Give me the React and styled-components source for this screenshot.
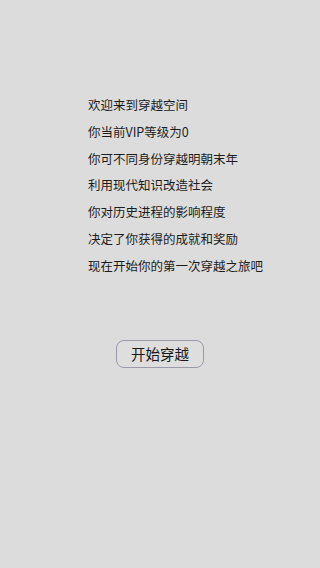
import React from "react";
import styled, { createGlobalStyle } from "styled-components";

const GlobalStyle = createGlobalStyle`
  html, body {
    margin: 0;
    padding: 0;
    background: #dcdcdc;
  }
  body {
    font-family: "Noto Sans CJK SC", "Liberation Sans", sans-serif;
  }
`;

const Page = styled.div`
  width: 320px;
  height: 568px;
  background: #dcdcdc;
  display: flex;
  flex-direction: column;
  align-items: center;
`;

const Intro = styled.div`
  margin-top: 92px;
  align-self: flex-start;
  padding-left: 88px;
  display: flex;
  flex-direction: column;
`;

const Line = styled.p`
  margin: 0;
  font-size: 12.5px;
  line-height: 26.8px;
  color: #1c1c1c;
`;

const StartButton = styled.button`
  margin-top: 60px;
  margin-left: 0;
  width: 88px;
  height: 28px;
  border: 1px solid #9c99aa;
  border-radius: 8px;
  background: #dedede;
  color: #1a1a1a;
  font-family: "Noto Sans CJK SC", "Liberation Sans", sans-serif;
  font-size: 14.5px;
  line-height: 26px;
  padding: 0;
  cursor: pointer;
`;

const lines = [
  "欢迎来到穿越空间",
  "你当前VIP等级为0",
  "你可不同身份穿越明朝末年",
  "利用现代知识改造社会",
  "你对历史进程的影响程度",
  "决定了你获得的成就和奖励",
  "现在开始你的第一次穿越之旅吧",
];

export default function App() {
  return (
    <>
      <GlobalStyle />
      <Page>
        <Intro>
          {lines.map((t) => (
            <Line key={t}>{t}</Line>
          ))}
        </Intro>
        <StartButton>开始穿越</StartButton>
      </Page>
    </>
  );
}
